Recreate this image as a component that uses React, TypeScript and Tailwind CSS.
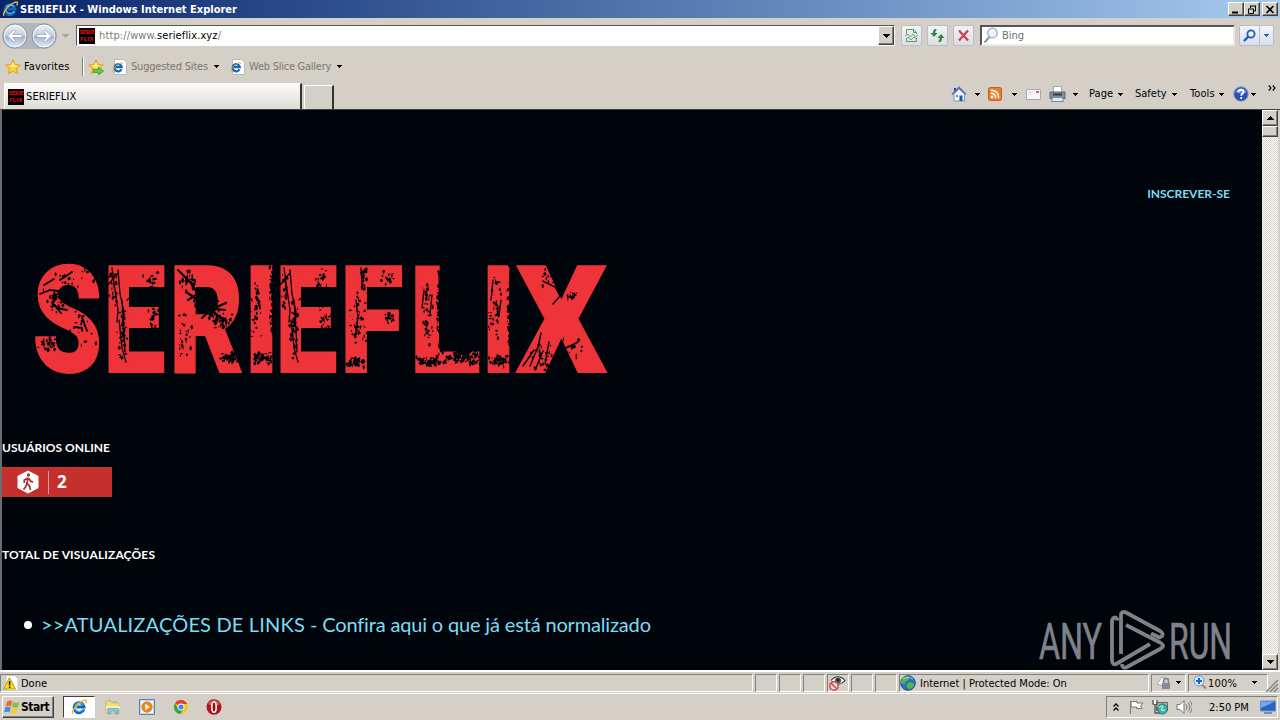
import type { ReactNode } from "react";
import clsx from "clsx";

const LETTERS = [
  { char: "S", x: 36, width: 64 },
  { char: "E", x: 109, width: 54 },
  { char: "R", x: 175, width: 66 },
  { char: "I", x: 251, width: 22 },
  { char: "E", x: 281, width: 54 },
  { char: "F", x: 346, width: 55 },
  { char: "L", x: 416, width: 62 },
  { char: "I", x: 488, width: 22 },
  { char: "X", x: 518, width: 88 },
];

// left bearing and ink width of each glyph, in em
const GLYPHS: Record<string, { left: number; ink: number }> = {
  S: { left: 0.031, ink: 0.575 },
  E: { left: 0.052, ink: 0.487 },
  R: { left: 0.052, ink: 0.575 },
  I: { left: 0.062, ink: 0.187 },
  F: { left: 0.052, ink: 0.475 },
  L: { left: 0.052, ink: 0.468 },
  X: { left: 0.01, ink: 0.625 },
};

// Worn patches of the logo: x, y, spread x, spread y, number of chips
const PATCHES = [
  [57, 300, 17, 14, 42],
  [47, 344, 11, 9, 30],
  [82, 318, 16, 32, 30],
  [75, 280, 24, 12, 18],
  [112, 292, 5, 24, 22],
  [121, 335, 6, 28, 40],
  [149, 280, 8, 12, 16],
  [152, 318, 6, 14, 20],
  [186, 279, 10, 12, 26],
  [205, 305, 17, 10, 54],
  [218, 318, 13, 10, 44],
  [228, 357, 10, 6, 55],
  [182, 340, 9, 30, 25],
  [255, 310, 6, 38, 35],
  [272, 300, 4, 46, 130],
  [262, 358, 12, 7, 60],
  [284, 290, 4, 24, 22],
  [293, 330, 6, 32, 40],
  [320, 278, 8, 12, 18],
  [324, 320, 8, 16, 22],
  [362, 276, 4, 14, 26],
  [357, 318, 10, 30, 45],
  [354, 361, 11, 6, 52],
  [388, 316, 5, 10, 18],
  [387, 276, 9, 10, 16],
  [427, 310, 7, 38, 40],
  [439, 310, 4, 48, 130],
  [430, 361, 17, 6, 65],
  [463, 356, 20, 9, 130],
  [494, 308, 7, 40, 38],
  [510, 312, 4, 52, 140],
  [498, 360, 12, 6, 52],
  [571, 295, 7, 5, 12],
  [573, 350, 12, 17, 16],
  [546, 280, 12, 16, 12],
  [540, 355, 15, 18, 26],
];

function buildChips() {
  let seed = 4711;
  const next = () => {
    seed = (seed * 16807) % 2147483647;
    return seed / 2147483647;
  };
  let path = "";
  for (const [cx, cy, rx, ry, count] of PATCHES) {
    for (let i = 0; i < count; i++) {
      const x = cx + (next() + next() - 1) * rx;
      const y = cy + (next() + next() - 1) * ry;
      const w = 0.6 + next() * 2;
      const h = 0.7 + next() * 2.8;
      path += `M${x.toFixed(1)} ${y.toFixed(1)}l${w.toFixed(1)} ${(-h / 2).toFixed(1)} ${(w / 2).toFixed(1)} ${h.toFixed(1)} ${(-w).toFixed(1)} ${(h / 2).toFixed(1)}z`;
    }
  }
  return path;
}

const CHIPS = buildChips();

function Logo() {
  const size = 148.5;
  return (
    <svg viewBox="34 262 576 114" className="block h-[114px] w-[576px] overflow-visible">
      <g fill="#ee3439" stroke="#ee3439" strokeWidth="2" fontFamily="Roboto, sans-serif" fontWeight="900" fontSize={size}>
        {LETTERS.map(({ char, x, width }, i) => {
          const glyph = GLYPHS[char];
          const scale = width / (glyph.ink * size);
          return (
            <text key={i} transform={`translate(${x - glyph.left * size * scale} 372.300) scale(${scale} 1)`}>
              {char}
            </text>
          );
        })}
      </g>
      <path d={CHIPS} fill="#00040b" />
      {/* Long scratches */}
      <g fill="none" stroke="#00040b" strokeWidth="1.3" strokeLinecap="round">
        <path d="M112 268l3 22 3 20-1 12M118 270l2 24 4 18-2 12M122 300l2 30 1 22M119 320l3 28 4 14M108 285l10-12M127 300l7-6" />
        <path d="M284 268l3 22 3 20-1 12M290 270l2 24 4 18-2 12M294 300l2 30 1 22M291 320l3 28 4 14M280 285l10-12M299 300l7-6" />
        <path d="M40 294l10-4 8 1 8-4-10 8-4 12M44 285l10-6M60 280l12-8M54 305l7 8M74 327l8 1M82 317l5 14M57 308l10 2" strokeWidth="1.800" />
        <path d="M178 270l12 12 6 9 3 12M186 292l12 8 18 14 8 6M202 318l10-9 14-6M207 308l18 2M196 304l16 12M188 300l8-5" strokeWidth="2.200" />
        <path d="M543 281l12 6 5 9M530 366l8-19 3-14M523 366l11-16M536 368l7-17M549 342l-4 22M566 348l12-6M553 304l7-8" strokeWidth="1.400" />
        <path d="M356 300l2 18-3 20M361 268l1 16M424 290l-2 18M432 295l-2 20M493 280l-2 20M501 300l-2 16M439 272l1 76M510 272l1 86" />
      </g>
    </svg>
  );
}

function IeIcon({ className }: { className?: string }) {
  return (
    <svg viewBox="0 0 16 16" className={className}>
      <path d="M12.8 10.3A5 5 0 1 1 13 7.900H5.500" fill="none" stroke="#1767b8" strokeWidth="3" />
      <path d="M12.300 10A4.500 4.500 0 0 1 4 9.200M4.300 6.300a4.400 4.400 0 0 1 7.800-.2" fill="none" stroke="#58bdf0" strokeWidth="1.100" />
      <path d="M2.200 14.800C.2 13.600 3 8.400 8 4.300c3.400-2.800 6.800-4 7.400-2.700.3.700 0 1.700-.7 2.800" fill="none" stroke="#e9b92f" strokeWidth="1.400" />
    </svg>
  );
}

function PageIeIcon() {
  return (
    <svg viewBox="0 0 16 16" className="h-4 w-4 shrink-0">
      <path d="M2.500.5h9l3 3v12h-12z" fill="#fff" stroke="#b3b8c4" />
      <path d="M9.500 10.300A3.600 3.600 0 1 1 9.800 8.200H4" fill="none" stroke="#1767b8" strokeWidth="2.200" />
      <path d="M1.500 13.200C-.5 12 3 7 6.500 5c3-1.700 4.500-1.500 4.300 0" fill="none" stroke="#e0ad22" />
    </svg>
  );
}

function SiteIcon() {
  return (
    <span className="flex h-4 w-4 shrink-0 flex-col items-center justify-center gap-px bg-black">
      <span className="font-['Roboto',sans-serif] text-[6px] font-black leading-[6px] tracking-[-0.2px] text-[#d40d0d]">SERIE</span>
      <span className="font-['Roboto',sans-serif] text-[6px] font-black leading-[6px] tracking-[0.3px] text-[#d40d0d]">FLIX</span>
    </span>
  );
}

function Caret({ size = "h-[3px] w-[5px]", color = "text-black" }: { size?: string; color?: string }) {
  return (
    <svg viewBox="0 0 5 3" className={clsx("shrink-0", size, color)} shapeRendering="crispEdges">
      <path d="M0 0h5v1H4v1H3v1H2V2H1V1H0z" fill="currentColor" />
    </svg>
  );
}

function BigCaret({ className = "text-black" }: { className?: string }) {
  return (
    <svg viewBox="0 0 7 4" className={clsx("h-[4px] w-[7px] shrink-0", className)} shapeRendering="crispEdges">
      <path d="M0 0h7v1H6v1H5v1H4v1H3V3H2V2H1V1H0z" fill="currentColor" />
    </svg>
  );
}

function StarIcon({ add = false }: { add?: boolean }) {
  return (
    <svg viewBox="0 0 16 16" className="h-4 w-4 shrink-0">
      <path d="M8 .8l2.100 4.700 5.200.6-3.900 3.400 1.200 5.200L8 12.100l-4.600 2.600 1.200-5.200L.7 6.100l5.200-.6z" fill="#fdd036" stroke="#e19a17" strokeWidth=".9" />
      <path d="M8 3l1.400 3.300 3 .4L8 8.500 3.500 6.700l3-.4z" fill="#fff0a0" />
      {add && <path d="M5.500 10.500h5v-2.300l5 3.800-5 3.700v-2.300h-5z" fill="#62d145" stroke="#239a25" strokeWidth=".8" />}
    </svg>
  );
}

function NavArrow({ flip = false }: { flip?: boolean }) {
  return (
    <svg viewBox="0 0 26 26" className={clsx("h-[26px] w-[26px] shrink-0", flip && "-scale-x-100")}>
      <defs>
        <linearGradient id={flip ? "nav-f" : "nav-b"} x2="0" y2="1">
          <stop offset="0" stopColor="#eef1f6" />
          <stop offset=".48" stopColor="#c6cfdd" />
          <stop offset=".5" stopColor="#a3b2ca" />
          <stop offset="1" stopColor="#e2edf8" />
        </linearGradient>
      </defs>
      <circle cx="13" cy="13" r="12" fill={`url(#${flip ? "nav-f" : "nav-b"})`} stroke="#8892a3" />
      <circle cx="13" cy="13" r="10.800" fill="none" stroke="#fff" strokeOpacity=".8" />
      <path d="M5.500 13l6.500-6 1.500 1.500-3 3H20v3h-9.500l3 3L12 19z" fill="#fff" stroke="#8d9cb5" strokeWidth=".7" />
    </svg>
  );
}

function ToolButton({ children }: { children: ReactNode }) {
  return (
    <span className="flex h-[21px] w-[21px] items-center justify-center rounded-[2px] border border-[#b9bdc8] bg-linear-to-b from-[#f2f3f6] to-[#dcdee5]">
      {children}
    </span>
  );
}

function WindowButton({ children, className }: { children: ReactNode; className?: string }) {
  return (
    <span className={clsx("flex h-[14px] w-4 items-center justify-center border border-t-white border-r-[#404040] border-b-[#404040] border-l-white bg-[#d4d0c8] shadow-[inset_-1px_-1px_0_#808080]", className)}>
      <svg viewBox="0 0 10 9" className="h-[9px] w-[10px]" fill="none" stroke="#000">
        {children}
      </svg>
    </span>
  );
}

function TitleBar() {
  return (
    <header className="flex h-[18px] items-center bg-linear-to-r from-[#0a246a] to-[#a6caf0] pr-[2px] pl-[2px]">
      <IeIcon className="h-4 w-4" />
      <h1 className="mt-px ml-[2px] grow font-bold">
        <span className="text-white">SERIEFLIX - Windows Internet Explorer</span>
      </h1>
      <WindowButton>
        <path d="M1 7.500h6" strokeWidth="2" />
      </WindowButton>
      <WindowButton>
        <path d="M3 1h6M3.500 1v2M8.500 1v5H7M1 4h6M1.500 4v4.500h5V4" />
      </WindowButton>
      <WindowButton className="ml-[2px]">
        <path d="M1.500 1l7 7M8.500 1l-7 7" strokeWidth="1.600" />
      </WindowButton>
    </header>
  );
}

function AddressBar() {
  return (
    <div className="flex h-[35px] items-center pl-[2px]">
      <div className="flex gap-[3px] rounded-full bg-[#b4b6bd]">
        <NavArrow />
        <NavArrow flip />
      </div>
      <span className="ml-[5px] flex w-[14px]">
        <BigCaret className="text-[#aaa69e]" />
      </span>
      <div className="flex h-[21px] w-[819px] items-center border border-t-[#555] border-r-white border-b-white border-l-[#555] bg-white pl-[2px]">
        <SiteIcon />
        <span className="mt-px ml-[4px] grow tracking-[0.12px] text-[#7a7a7a]">
          http://www.<span className="text-black">serieflix.xyz</span>/
        </span>
        <span className="flex h-[19px] w-4 items-center justify-center border border-t-white border-r-[#404040] border-b-[#404040] border-l-white bg-[#d4d0c8] shadow-[inset_-1px_-1px_0_#808080]">
          <BigCaret />
        </span>
      </div>
      <div className="ml-[6px] flex gap-[5px]">
        <ToolButton>
          <svg viewBox="0 0 15 15" className="h-[15px] w-[15px]" fill="none" stroke="#55a455">
            <path d="M2.500 6V1.500h7l3 3V6M2.500 10v3.500h10V10M9.500 1.500v3h3" />
            <path d="M1 8l3-2 2.500 3L9 6l2.500 3L14 7M2 11l2.500-2L7 12l3-3 3 2" strokeWidth=".9" />
          </svg>
        </ToolButton>
        <ToolButton>
          <svg viewBox="0 0 15 15" className="h-[15px] w-[15px]" fill="#2d8a35">
            <path d="M5.500 1C3.500 1.200 3 2.500 3 5H.5L4 9l3.500-4H5.300c0-1.500.2-2.500 1.700-3.200zM9.500 14c2-.2 2.500-1.500 2.500-4h2.500L11 6l-3.500 4h2.200c0 1.500-.2 2.500-1.700 3.200z" />
          </svg>
        </ToolButton>
        <ToolButton>
          <svg viewBox="0 0 15 15" className="h-[15px] w-[15px]" stroke="#cc4046" strokeWidth="2.200">
            <path d="M3 2.500l9 10M12 2.500l-9 10" />
          </svg>
        </ToolButton>
      </div>
      <div className="ml-[6px] flex h-[21px] w-[255px] items-center border-2 border-t-[#555] border-r-[#ece9e4] border-b-[#ece9e4] border-l-[#555] bg-white pl-px">
        <svg viewBox="0 0 16 17" className="h-[17px] w-4" fill="none">
          <path d="M6.500 10L1.500 15.500" stroke="#8b94a5" strokeWidth="2" />
          <circle cx="9.500" cy="6" r="4.800" fill="#e7f1fa" stroke="#a1abbb" strokeWidth="1.300" />
          <path d="M7 5.500a3 3 0 0 1 4-2" stroke="#fff" strokeWidth="1.300" />
        </svg>
        <span className="mt-px ml-[3px] text-[#707070]">Bing</span>
      </div>
      <div className="ml-[4px] flex h-[21px] w-[35px] rounded-[2px] border border-[#b9bdc8] bg-linear-to-b from-[#f2f5fa] to-[#d8e0ec]">
        <span className="flex w-5 items-center justify-center border-r border-[#b9bdc8]">
          <svg viewBox="0 0 13 13" className="h-[13px] w-[13px]" fill="none" stroke="#2359c0">
            <circle cx="8" cy="5" r="3.600" fill="#e9f3ff" strokeWidth="1.800" />
            <path d="M5.300 7.700L1 12" strokeWidth="2.400" />
          </svg>
        </span>
        <span className="flex grow items-center justify-center">
          <Caret color="text-[#2359c0]" />
        </span>
      </div>
    </div>
  );
}

function FavoritesBar() {
  return (
    <div className="flex h-[27px] items-center pl-[5px]">
      <StarIcon />
      <span className="ml-[3px] w-[58px] tracking-[0.1px]">Favorites</span>
      <span className="mr-[4px] h-[19px] w-[2px] border-r border-l border-r-white border-l-[#808080]" />
      <StarIcon add />
      <span className="ml-[8px] flex items-center text-[#7b7770]">
        <PageIeIcon />
        <span className="mt-px ml-[3px] w-[83px] tracking-[-0.2px]">Suggested Sites</span>
        <Caret />
      </span>
      <span className="ml-[11px] flex items-center text-[#7b7770]">
        <PageIeIcon />
        <span className="mt-px ml-[3px] w-[88px] tracking-[-0.25px]">Web Slice Gallery</span>
        <Caret />
      </span>
    </div>
  );
}

function CommandBar() {
  return (
    <div className="flex h-[28px] items-center">
      <svg viewBox="0 0 16 16" className="h-4 w-4" fill="none">
        <path d="M3 2h2v4H3z" fill="#2c3f96" />
        <path d="M3 8l5-5 5.500 5v7H3z" fill="#eef3fc" stroke="#8296ba" />
        <path d="M1 8.500L8 1.500l7 7" stroke="#5471b4" strokeWidth="1.600" />
        <path d="M8.500 9.500h3V15h-3z" fill="#1b5b9c" />
        <path d="M5 9h2v2H5z" fill="#5f88c9" />
      </svg>
      <span className="ml-[8px] flex"><Caret /></span>
      <svg viewBox="0 0 14 14" className="ml-[8px] h-[14px] w-[14px]" fill="none" stroke="#fff">
        <rect x=".5" y=".5" width="13" height="13" rx="2" fill="#ee7c2b" stroke="#c95b18" />
        <circle cx="4" cy="10" r="1.400" fill="#fff" stroke="none" />
        <path d="M2.700 6.200c3 0 5 2 5 5M2.700 3.200c5 0 8 3 8 8" strokeWidth="1.500" />
      </svg>
      <span className="ml-[10px] flex"><Caret /></span>
      <svg viewBox="0 0 15 11" className="ml-[9px] h-[11px] w-[15px]">
        <path d="M.5.500h14v10H.5z" fill="#f7f5fa" stroke="#aba8b3" />
        <path d="M2 3h5M2 5h3" stroke="#cfd2e0" />
        <path d="M10 2h3v2h-3z" fill="#d4607a" />
      </svg>
      <svg viewBox="0 0 17 16" className="ml-[8px] h-4 w-[17px]">
        <path d="M4.500.500h8v6h-8z" fill="#fff" stroke="#a2a5ac" />
        <path d="M1 6h15v6.500H1z" fill="#858d9a" stroke="#616872" />
        <path d="M4 7.500h9v2H4z" fill="#363b45" />
        <path d="M3.500 11.500h10l1 4h-12z" fill="#d7ebfb" stroke="#7f8995" />
      </svg>
      <span className="ml-[7px] flex"><Caret /></span>
      <span className="ml-[11px] w-[29px] tracking-[0.1px]">Page</span>
      <Caret />
      <span className="ml-[12px] w-[37px]">Safety</span>
      <Caret />
      <span className="ml-[13px] w-[29px] tracking-[0.1px]">Tools</span>
      <Caret />
      <svg viewBox="0 0 16 16" className="ml-[9px] h-4 w-4">
        <circle cx="8" cy="8" r="7.300" fill="#2a50b2" stroke="#98a4c6" />
        <path d="M2.500 6a6 6 0 0 1 11 0c-3 2-7 2-11 0z" fill="#7695dc" />
        <path d="M5.500 6c0-3 5-3 5 0 0 1.800-2.300 1.700-2.300 3.700M8.200 11v2" fill="none" stroke="#fff" strokeWidth="1.800" />
      </svg>
      <span className="ml-[2px] flex"><Caret /></span>
      <svg viewBox="0 0 8 6" className="mb-[13px] ml-[12px] h-[6px] w-2" fill="none" stroke="#000" strokeWidth="1.200">
        <path d="M.8.500L3 3 .8 5.500M4.800.500L7 3 4.800 5.500" />
      </svg>
    </div>
  );
}

function TabRow() {
  return (
    <div className="flex h-[29px] items-end justify-between pr-[4px] pl-[4px]">
      <div className="flex items-end">
        <div className="flex h-[26px] w-[298px] items-center border-t border-r-2 border-l border-t-white border-r-[#333] border-l-white bg-linear-to-b from-[#fbfbfa] to-[#dedbd5] pl-[3px]">
          <SiteIcon />
          <span className="ml-[2px] tracking-[0.1px]">SERIEFLIX</span>
        </div>
        <div className="ml-[2px] h-[24px] w-[30px] border-t border-r-2 border-l border-t-white border-r-[#333] border-l-white" />
      </div>
      <div className="flex pb-px">
        <CommandBar />
      </div>
    </div>
  );
}

function ScrollArrow({ down = false }: { down?: boolean }) {
  return (
    <span className="flex h-4 w-4 items-center justify-center border border-t-white border-r-[#404040] border-b-[#404040] border-l-white bg-[#d4d0c8] shadow-[inset_-1px_-1px_0_#808080]">
      <BigCaret className={clsx("text-black", !down && "rotate-180")} />
    </span>
  );
}

function Scrollbar() {
  return (
    <div className="flex w-[18px] shrink-0 flex-col border-r-2 border-[#d4d0c8] bg-[repeating-conic-gradient(#fff_0_25%,#d4d0c8_0_50%)] bg-[length:2px_2px]">
      <ScrollArrow />
      <span className="h-[11px] w-4 border border-t-white border-r-[#404040] border-b-[#404040] border-l-white bg-[#d4d0c8] shadow-[inset_-1px_-1px_0_#808080]" />
      <span className="grow" />
      <ScrollArrow down />
    </div>
  );
}

function Watermark() {
  return (
    <svg viewBox="0 0 196 62" className="absolute right-[28px] bottom-[-1px] h-[62px] w-[196px] overflow-visible" fill="none">
      <g fill="#7f8288" stroke="#7f8288" strokeWidth=".7" fontFamily="Roboto, sans-serif" fontSize="50">
        <text x="1" y="50" textLength="63" lengthAdjust="spacingAndGlyphs">ANY</text>
        <text x="131" y="50" textLength="63" lengthAdjust="spacingAndGlyphs">RUN</text>
      </g>
      <g stroke="#7f8288" strokeWidth="3.800" strokeLinejoin="round">
        <path d="M79 11.500V10c-2-3-5-1-5 3v38c0 4 2 5 5 3.500L112 35" />
        <path d="M83 45V7c0-4 2-5 5-3.500l34 18.500c4 2.500 3 5.500-.5 6.500L113 24.500" />
        <path d="M88 16l34 17.500c4 2.500 4 4 0 6.500L89 58c-3 1.500-5 .5-5-3" />
      </g>
    </svg>
  );
}

function WebPage() {
  return (
    <main className="relative flex h-[561px] border-t border-l-2 border-t-[#404040] border-l-[#6c6c6c] bg-[#00040b] font-['Lato',sans-serif] text-white">
      <div className="relative flex grow flex-col overflow-hidden">
        <a className="mt-[76px] mr-[32px] self-end text-[12px] leading-4 font-bold text-[#7cdcf3]">INSCREVER-SE</a>
        <div className="mt-[60px] ml-8">
          <Logo />
        </div>
        <h2 className="mt-[64px] text-[12px] leading-4 font-bold">USUÁRIOS ONLINE</h2>
        <div className="mt-[11px] flex h-[30px] w-[110px] items-center bg-[#c5302f] pl-[15px]">
          <svg viewBox="0 0 22 24" className="h-6 w-[22px]">
            <path d="M11 .5l10.500 5.500v12L11 23.500.5 18V6z" fill="#fff" />
            <circle cx="11.500" cy="5" r="1.700" fill="#a93630" />
            <path d="M11 7.500l-1 6 2.500 2.500 1 4M10 13l-1.500 4-2 2.500M10.500 8.200L7.300 10v3M12 8.500l1.700 2.700 2.300 1" fill="none" stroke="#a93630" strokeWidth="1.800" />
          </svg>
          <span className="ml-[9px] h-[23px] w-px bg-[#e59896]" />
          <span className="ml-[8px] font-['Open_Sans',sans-serif] text-[17px] font-bold">2</span>
        </div>
        <h2 className="mt-[50px] text-[12px] leading-4 font-bold tracking-[0.15px]">TOTAL DE VISUALIZAÇÕES</h2>
        <ul className="mt-[47px]">
          <li className="flex items-center">
            <span className="mt-[2px] ml-[22px] h-2 w-2 rounded-full bg-white" />
            <a className="ml-[9px] text-[20px] leading-[28px] tracking-[-0.16px] whitespace-nowrap text-[#7cdcf3]">
              <span className="tracking-[0.18px]">&gt;&gt;ATUALIZAÇÕES DE LINKS</span> - Confira aqui o que já está normalizado
            </a>
          </li>
        </ul>
        <Watermark />
      </div>
      <Scrollbar />
    </main>
  );
}

function StatusCell({ children, className }: { children?: ReactNode; className?: string }) {
  return (
    <span className={clsx("flex h-[18px] items-center border border-t-[#808080] border-r-white border-b-white border-l-[#808080]", className)}>
      {children}
    </span>
  );
}

function StatusBar() {
  return (
    <div className="flex h-[24px] items-center gap-[2px] border-t-2 border-b border-t-white border-b-white">
      <StatusCell className="w-[753px] pl-[2px]">
        <svg viewBox="0 0 16 16" className="h-4 w-4">
          <path d="M3 .5h9l3 3v12H3z" fill="#fff" stroke="#c9c6bf" />
          <path d="M6.500 2.500l6 11.500H.7z" fill="#f6da23" stroke="#c39b10" />
          <path d="M6.600 6v4.500M6.600 11.500V13" stroke="#222" strokeWidth="1.500" />
        </svg>
        <span className="mt-[2px] ml-[2px]">Done</span>
      </StatusCell>
      <StatusCell className="w-[22px]" />
      <StatusCell className="w-[22px]" />
      <StatusCell className="w-[22px]" />
      <StatusCell className="w-[22px]">
        <svg viewBox="0 0 18 16" className="h-4 w-[18px]" fill="none">
          <path d="M3 5.500c4-5 10-5 14 0-3 4-9 5-13 1" fill="#f8f8f8" stroke="#333" strokeWidth="1.200" />
          <circle cx="10" cy="5.500" r="3" fill="#555" />
          <circle cx="10" cy="5" r="1.200" fill="#111" />
          <circle cx="6" cy="11" r="4.200" fill="#f7d6d3" stroke="#c84e48" strokeWidth="1.500" />
          <path d="M3 8l6 6" stroke="#c84e48" strokeWidth="1.500" />
        </svg>
      </StatusCell>
      <StatusCell className="w-[22px]" />
      <StatusCell className="w-[22px]" />
      <StatusCell className="w-[250px]">
        <svg viewBox="0 0 16 16" className="h-4 w-4">
          <circle cx="8" cy="8" r="7.300" fill="#276fc1" stroke="#1c4f93" />
          <path d="M4 2c4-2 6 0 5 2S6 6 5 8 1 8 1 8s0-4 3-6zM8 8c3-2 6 0 6 2s-3 4-5 4-3-5-1-6z" fill="#54b844" />
          <path d="M3 4c3-2 7-2 10 0" stroke="#a6dcf5" fill="none" />
        </svg>
        <span className="mt-[2px] ml-[4px]">Internet | Protected Mode: On</span>
      </StatusCell>
      <StatusCell className="w-[35px] pl-[4px]">
        <svg viewBox="0 0 16 15" className="h-[15px] w-4" fill="none">
          <path d="M1 9l5-7 4 1-3 8z" fill="#f4f4f4" stroke="#aaa" />
          <path d="M7.500 8V6a2.500 2.500 0 0 1 5 0v2" stroke="#858585" strokeWidth="1.500" />
          <path d="M6 8h8v6H6z" fill="#888c92" />
        </svg>
        <span className="ml-[4px] flex"><Caret /></span>
      </StatusCell>
      <StatusCell className="w-[80px] pl-[4px]">
        <svg viewBox="0 0 14 15" className="h-[15px] w-[14px]" fill="none">
          <path d="M8.500 9.500l4.500 4" stroke="#b8844e" strokeWidth="2.200" />
          <circle cx="6" cy="6" r="5" fill="#d4eaff" stroke="#6f9bd1" />
          <path d="M6 3v6M3 6h6" stroke="#1b63c5" strokeWidth="2" />
        </svg>
        <span className="mt-[2px] ml-px w-[44px] tracking-[0.2px]">100%</span>
        <Caret />
      </StatusCell>
      <svg viewBox="0 0 12 12" className="mt-[7px] ml-[-4px] h-3 w-3" stroke="#808080" strokeWidth="1.400">
        <path d="M0 12L12 0M4 12l8-8M8 12l4-4" />
      </svg>
    </div>
  );
}

function Taskbar() {
  return (
    <footer className="flex h-[26px] items-center pr-[2px] pl-[2px]">
      <button className="flex h-[22px] w-[52px] items-center border border-t-white border-r-[#404040] border-b-[#404040] border-l-white pl-px font-bold shadow-[inset_-1px_-1px_0_#808080]">
        <svg viewBox="0 0 16 16" className="h-4 w-4 shrink-0">
          <path d="M3 2.500c2-1.500 4-1 5.500 0L7 7.500c-2-1-3.500-1-5.500 0z" fill="#ef6b31" />
          <path d="M9.300 3c2 1 4 1 6 0L14 8c-2 1.200-4 .8-6 0z" fill="#83c341" />
          <path d="M1.300 8.500c2-1.200 3.700-1 5.500 0l-1.500 5c-2-1-3.700-1-5.300 0z" fill="#3a91d8" />
          <path d="M7.600 9c2 1 4 1 6 0l-1.300 5c-2 1.200-4.200.8-6.200 0z" fill="#fbc72e" />
        </svg>
        <span className="ml-px text-[12px] tracking-[-0.5px]">Start</span>
      </button>
      <span className="ml-[9px] flex h-[22px] w-[32px] items-center justify-center border border-t-[#404040] border-r-white border-b-white border-l-[#404040] bg-white">
        <IeIcon className="h-4 w-4" />
      </span>
      <svg viewBox="0 0 16 16" className="ml-[10px] h-4 w-4">
        <path d="M1 2h5l1 2h7v10H1z" fill="#f3db80" stroke="#cfae4e" strokeWidth=".7" />
        <path d="M3 1.500h3M8 3h4" stroke="#7fb3d8" />
        <path d="M1 7h14v3H1z" fill="#faeeb5" />
        <path d="M3 15V9.500h10V15h-2.500v-3h-5v3z" fill="#8bc9ee" stroke="#4f95c8" strokeWidth=".7" />
      </svg>
      <svg viewBox="0 0 16 16" className="ml-[18px] h-4 w-4">
        <path d="M.5.500h15v15H.5z" fill="#b9d9f2" stroke="#4c83bd" />
        <path d="M2 2h12v12H2z" fill="#f4f9fd" />
        <circle cx="8" cy="8" r="5.700" fill="#f08317" />
        <path d="M6.300 4.800l4.700 3.200-4.700 3.200z" fill="#fff" />
      </svg>
      <svg viewBox="0 0 16 16" className="ml-[18px] h-4 w-4">
        <circle cx="8" cy="8" r="7" fill="#f6c629" />
        <path d="M8 8L2 4.200A7 7 0 0 1 14.200 5H8z" fill="#df4133" />
        <path d="M2 4.200A7 7 0 0 0 7.500 15l3-5.500L5.300 9.800z" fill="#37a352" />
        <circle cx="8" cy="8" r="3.400" fill="#fff" />
        <circle cx="8" cy="8" r="2.600" fill="#4385ea" />
      </svg>
      <svg viewBox="0 0 16 16" className="ml-[17px] h-4 w-4">
        <ellipse cx="8" cy="8" rx="7.500" ry="7.800" fill="#b3131b" />
        <path d="M2 5c2-5 10-5 12 0-2 2-10 2-12 0z" fill="#de5054" />
        <ellipse cx="8" cy="8" rx="2.200" ry="5.300" fill="#8e0d12" stroke="#fff" strokeWidth="1.600" />
      </svg>
      <span className="grow" />
      <div className="flex h-[22px] w-[172px] items-center border border-t-[#808080] border-r-white border-b-white border-l-[#808080] pl-[6px]">
        <svg viewBox="0 0 6 8" className="h-2 w-[6px]" fill="none" stroke="#000" strokeWidth="1.300">
          <path d="M.5 3.500L3 1l2.500 2.500M.5 7.500L3 5l2.500 2.500" />
        </svg>
        <svg viewBox="0 0 16 16" className="ml-[9px] h-4 w-4" fill="#fff" stroke="#777">
          <path d="M2.500 2v13M3 2.500h6v1.500h6l-2.500 3L14 9.500H8.500V8H3z" />
        </svg>
        <svg viewBox="0 0 17 16" className="ml-[8px] h-4 w-[17px]">
          <path d="M4.500 3.500h11v8h-11z" fill="#9fb6c0" stroke="#666" />
          <path d="M1 1v4h4V1M3 5v9h5" fill="none" stroke="#555" strokeWidth="1.300" />
          <path d="M2 1h2v4H2z" fill="#fff" />
          <circle cx="10.500" cy="10" r="5" fill="#3aada5" stroke="#227c78" />
          <path d="M7 8.500c3-3 5-1 3 1s1 3 3 1" fill="none" stroke="#b5efe4" strokeWidth="1.300" />
        </svg>
        <svg viewBox="0 0 16 16" className="ml-[7px] h-4 w-4" fill="none" stroke="#777">
          <path d="M1 5.500h3l4-4v13l-4-4H1z" fill="#fff" />
          <path d="M10 5c1.300 2 1.300 4 0 6M12 3.500c2.500 3 2.500 6 0 9M14 2c3 4 3 8 0 12" />
        </svg>
        <span className="mt-px ml-[17px] w-[51px]">2:50 PM</span>
        <svg viewBox="0 0 16 14" className="h-[14px] w-4">
          <path d="M.5 1h15v10H.5z" fill="#2b63be" stroke="#6590cc" />
          <path d="M1 1.500h14L1 8z" fill="#73a8e8" />
          <path d="M4 13h8" stroke="#5f7396" strokeWidth="1.500" />
        </svg>
      </div>
    </footer>
  );
}

export default function App() {
  return (
    <div className="flex h-[720px] w-[1280px] flex-col overflow-hidden bg-[#d4d0c8] font-['DejaVu_Sans_Condensed','DejaVu_Sans',sans-serif] text-[11px] leading-[14px] whitespace-nowrap text-black">
      <TitleBar />
      <AddressBar />
      <FavoritesBar />
      <TabRow />
      <WebPage />
      <StatusBar />
      <Taskbar />
    </div>
  );
}
